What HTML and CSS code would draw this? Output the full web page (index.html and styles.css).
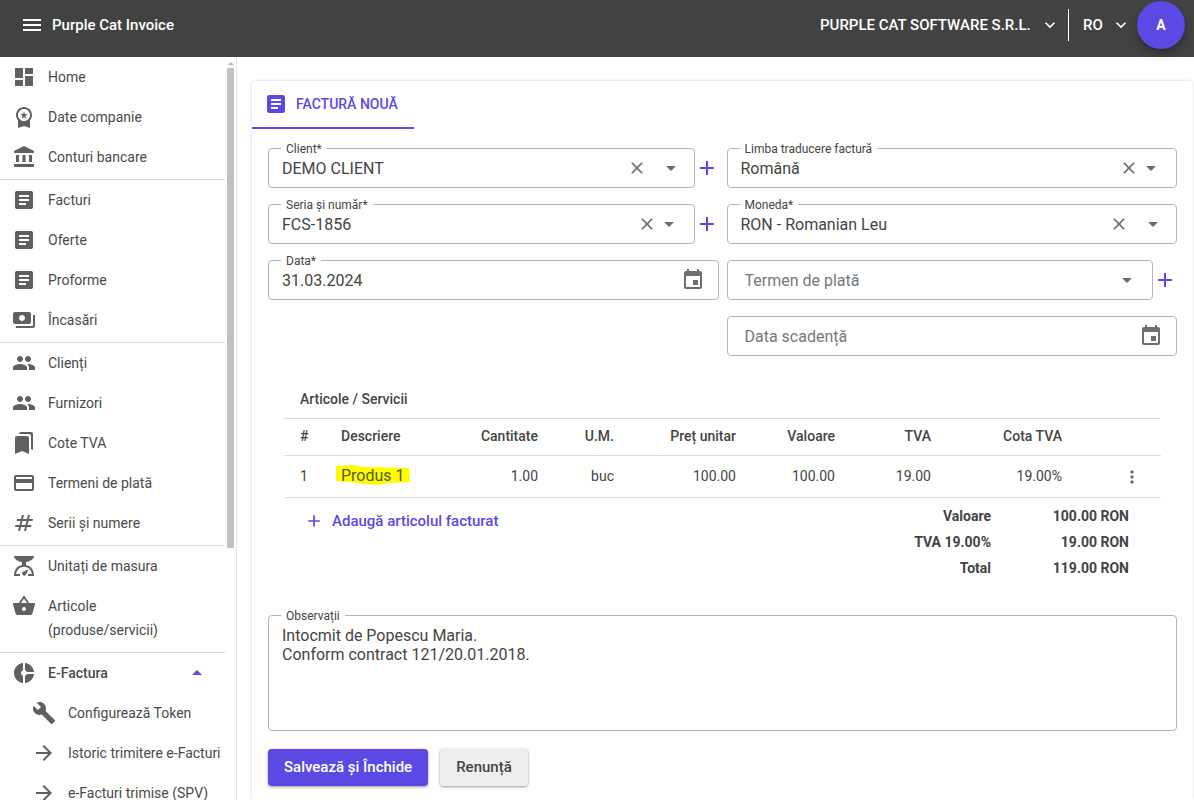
FILE: index.html
```html
<!DOCTYPE html>
<html lang="ro">
<head>
    <meta charset="UTF-8">
    <meta name="viewport" content="width=device-width, initial-scale=1.0">
    <title>Purple Cat Invoice</title>
    <link rel="stylesheet" href="styles.css">
</head>
<body>
    <!-- Icon sprite -->
    <svg class="sprite" aria-hidden="true">
        <symbol id="menu" viewBox="0 0 24 24"><path d="M3 18h18v-2H3v2zm0-5h18v-2H3v2zm0-7v2h18V6H3z"/></symbol>
        <symbol id="chevron" viewBox="0 0 24 24"><path d="M16.59 8.59L12 13.17 7.41 8.59 6 10l6 6 6-6z"/></symbol>
        <symbol id="dashboard" viewBox="0 0 24 24"><path d="M3 13h8V3H3v10zm0 8h8v-6H3v6zm10 0h8V11h-8v10zm0-18v6h8V3h-8z"/></symbol>
        <symbol id="medal" viewBox="0 0 24 24"><path d="M9.68 13.69L12 11.93l2.31 1.76-.88-2.85L15.75 9h-2.84L12 6.19 11.09 9H8.25l2.31 1.84-.88 2.85zM20 10c0-4.42-3.58-8-8-8s-8 3.58-8 8c0 2.03.76 3.87 2 5.28V23l6-2 6 2v-7.72c1.24-1.41 2-3.25 2-5.28zm-8-6c3.31 0 6 2.69 6 6s-2.69 6-6 6-6-2.69-6-6 2.69-6 6-6z"/></symbol>
        <symbol id="bank" viewBox="0 0 24 24"><path d="M4 10v7h3v-7zm6.5 0v7h3v-7zM17 10v7h3v-7zM2 22h20v-3H2zM12 1L2 6v2h20V6z"/></symbol>
        <symbol id="article" viewBox="0 0 24 24"><path d="M19 3H5c-1.1 0-2 .9-2 2v14c0 1.1.9 2 2 2h14c1.1 0 2-.9 2-2V5c0-1.1-.9-2-2-2zm-5 14H7v-2h7v2zm3-4H7v-2h10v2zm0-4H7V7h10v2z"/></symbol>
        <symbol id="payments" viewBox="0 0 24 24"><path d="M19 14V6c0-1.1-.9-2-2-2H3c-1.1 0-2 .9-2 2v8c0 1.1.9 2 2 2h14c1.1 0 2-.9 2-2zm-9-1c-1.66 0-3-1.34-3-3s1.34-3 3-3 3 1.34 3 3-1.34 3-3 3zm13-6v11c0 1.1-.9 2-2 2H4v-2h17V7h2z"/></symbol>
        <symbol id="people" viewBox="0 0 24 24"><path d="M16 11c1.66 0 2.99-1.34 2.99-3S17.66 5 16 5c-1.66 0-3 1.34-3 3s1.34 3 3 3zm-8 0c1.66 0 2.99-1.34 2.99-3S9.66 5 8 5C6.34 5 5 6.34 5 8s1.34 3 3 3zm0 2c-2.33 0-7 1.17-7 3.5V19h14v-2.5c0-2.33-4.67-3.5-7-3.5zm8 0c-.29 0-.62.02-.97.05 1.16.84 1.97 1.97 1.97 3.45V19h6v-2.5c0-2.33-4.67-3.5-7-3.5z"/></symbol>
        <symbol id="bookmarks" viewBox="0 0 24 24"><path d="M19 18l2 1V3c0-1.1-.9-2-2-2H8.99C7.89 1 7 1.9 7 3h10c1.1 0 2 .9 2 2v13zM15 5H5c-1.1 0-2 .9-2 2v16l7-3 7 3V7c0-1.1-.9-2-2-2z"/></symbol>
        <symbol id="card" viewBox="0 0 24 24"><path d="M20 4H4c-1.11 0-1.99.89-1.99 2L2 18c0 1.11.89 2 2 2h16c1.11 0 2-.89 2-2V6c0-1.11-.89-2-2-2zm0 14H4v-6h16v6zm0-10H4V6h16v2z"/></symbol>
        <symbol id="hash" viewBox="0 0 24 24"><path d="M6 20l1-4H3l.5-2h4l1-4h-4L5 8h4l1-4h2l-1 4h4l1-4h2l-1 4h4l-.5 2h-4l-1 4h4l-.5 2h-4l-1 4h-2l1-4H9l-1 4zm3.5-6h4l1-4h-4z"/></symbol>
        <symbol id="scale" viewBox="0 0 24 24"><path d="M14 11V8c4.56-.58 8-3.1 8-6H2c0 2.9 3.44 5.42 8 6v3c-3.68.73-8 3.61-8 11h6v-2H4.13c.93-6.83 6.65-7.2 7.87-7.2s6.94.37 7.87 7.2H16v2h6c0-7.39-4.32-10.27-8-11z"/><path d="M16.6 15.4l-2.7 5.3a2.1 2.1 0 1 1-3-2.9z"/></symbol>
        <symbol id="basket" viewBox="0 0 24 24"><path d="M17.21 9l-4.38-6.56c-.19-.28-.51-.42-.83-.42-.32 0-.64.14-.83.43L6.79 9H2c-.55 0-1 .45-1 1 0 .09.01.18.04.27l2.54 9.27c.23.84 1 1.46 1.92 1.46h13c.92 0 1.69-.62 1.93-1.46l2.54-9.27L23 10c0-.55-.45-1-1-1h-4.79zM9 9l3-4.4L15 9H9zm3 8c-1.1 0-2-.9-2-2s.9-2 2-2 2 .9 2 2-.9 2-2 2z"/></symbol>
        <symbol id="donut" viewBox="0 0 24 24"><path d="M11 9.16V2c-5 .5-9 4.79-9 10s4 9.5 9 10v-7.16c-1-.41-2-1.52-2-2.84s1-2.43 2-2.84zM14.86 11H22c-.48-4.75-4-8.53-9-9v7.16c1 .3 1.52.98 1.86 1.84zM13 14.84V22c5-.47 8.52-4.25 9-9h-7.14c-.34.86-.86 1.54-1.86 1.84z"/></symbol>
        <symbol id="wrench" viewBox="0 0 24 24"><path d="M22.7 19l-9.1-9.1c.9-2.3.4-5-1.5-6.9-2-2-5-2.4-7.4-1.3L9 6 6 9 1.6 4.7C.4 7.1.9 10.1 2.9 12.1c1.9 1.9 4.6 2.4 6.9 1.5l9.1 9.1c.4.4 1 .4 1.4 0l2.3-2.3c.5-.4.5-1.1.1-1.4z"/></symbol>
        <symbol id="forward" viewBox="0 0 24 24"><path d="M12 4l-1.41 1.41L16.17 11H4v2h12.17l-5.58 5.59L12 20l8-8z"/></symbol>
        <symbol id="up" viewBox="0 0 24 24"><path d="M7 14l5-5 5 5z"/></symbol>
        <symbol id="down" viewBox="0 0 24 24"><path d="M7 10l5 5 5-5z"/></symbol>
        <symbol id="close" viewBox="0 0 24 24"><path d="M19 6.41L17.59 5 12 10.59 6.41 5 5 6.41 10.59 12 5 17.59 6.41 19 12 13.41 17.59 19 19 17.59 13.41 12z"/></symbol>
        <symbol id="add" viewBox="0 0 24 24"><path d="M19 13h-6v6h-2v-6H5v-2h6V5h2v6h6v2z"/></symbol>
        <symbol id="event" viewBox="0 0 24 24"><path d="M17 12h-5v5h5v-5zM16 1v2H8V1H6v2H5c-1.11 0-1.99.9-1.99 2L3 19c0 1.1.89 2 2 2h14c1.1 0 2-.9 2-2V5c0-1.1-.9-2-2-2h-1V1h-2zm3 18H5V8h14v11z"/></symbol>
        <symbol id="more" viewBox="0 0 24 24"><path d="M12 8c1.1 0 2-.9 2-2s-.9-2-2-2-2 .9-2 2 .9 2 2 2zm0 2c-1.1 0-2 .9-2 2s.9 2 2 2 2-.9 2-2-.9-2-2-2zm0 6c-1.1 0-2 .9-2 2s.9 2 2 2 2-.9 2-2-.9-2-2-2z"/></symbol>
    </svg>

    <header class="topbar">
        <button class="icon-btn" type="button" aria-label="Meniu"><svg class="icon"><use href="#menu"/></svg></button>
        <span class="brand">Purple Cat Invoice</span>
        <div class="picker">
            <select aria-label="Companie"><option>PURPLE CAT SOFTWARE S.R.L.</option></select>
            <svg class="icon icon-chevron"><use href="#chevron"/></svg>
        </div>
        <div class="picker picker-lang">
            <select aria-label="Limba"><option>RO</option></select>
            <svg class="icon icon-chevron"><use href="#chevron"/></svg>
        </div>
        <button class="avatar" type="button" aria-label="Cont">A</button>
    </header>

    <div class="layout">
        <aside class="sidebar">
            <nav class="nav">
                <div class="nav-group">
                    <a class="nav-item" href="#"><svg class="icon"><use href="#dashboard"/></svg>Home</a>
                    <a class="nav-item" href="#"><svg class="icon"><use href="#medal"/></svg>Date companie</a>
                    <a class="nav-item" href="#"><svg class="icon"><use href="#bank"/></svg>Conturi bancare</a>
                </div>
                <div class="nav-group">
                    <a class="nav-item" href="#"><svg class="icon"><use href="#article"/></svg>Facturi</a>
                    <a class="nav-item" href="#"><svg class="icon"><use href="#article"/></svg>Oferte</a>
                    <a class="nav-item" href="#"><svg class="icon"><use href="#article"/></svg>Proforme</a>
                    <a class="nav-item" href="#"><svg class="icon"><use href="#payments"/></svg>Încasări</a>
                </div>
                <div class="nav-group">
                    <a class="nav-item" href="#"><svg class="icon"><use href="#people"/></svg>Clienți</a>
                    <a class="nav-item" href="#"><svg class="icon"><use href="#people"/></svg>Furnizori</a>
                    <a class="nav-item" href="#"><svg class="icon"><use href="#bookmarks"/></svg>Cote TVA</a>
                    <a class="nav-item" href="#"><svg class="icon"><use href="#card"/></svg>Termeni de plată</a>
                    <a class="nav-item" href="#"><svg class="icon"><use href="#hash"/></svg>Serii și numere</a>
                </div>
                <div class="nav-group">
                    <a class="nav-item" href="#"><svg class="icon"><use href="#scale"/></svg>Unitați de masura</a>
                    <a class="nav-item" href="#"><svg class="icon"><use href="#basket"/></svg>Articole<br>(produse/servicii)</a>
                </div>
                <div class="nav-group">
                    <button class="nav-item nav-parent" type="button"><svg class="icon"><use href="#donut"/></svg>E-Factura<svg class="icon icon-up"><use href="#up"/></svg></button>
                    <a class="nav-item nav-child" href="#"><svg class="icon"><use href="#wrench"/></svg>Configurează Token</a>
                    <a class="nav-item nav-child" href="#"><svg class="icon"><use href="#forward"/></svg>Istoric trimitere e-Facturi</a>
                    <a class="nav-item nav-child" href="#"><svg class="icon"><use href="#forward"/></svg>e-Facturi trimise (SPV)</a>
                </div>
            </nav>
            <div class="scrollbar">
                <div class="scroll-arrow"></div>
                <div class="scroll-thumb"></div>
            </div>
        </aside>

        <main class="main">
            <form class="card">
                <div class="tabs">
                    <button class="tab" type="button"><svg class="icon"><use href="#article"/></svg>FACTURĂ NOUĂ</button>
                </div>

                <div class="card-body">
                    <div class="fields">
                        <div class="field-row">
                            <div class="field field-wide">
                                <label for="client">Client*</label>
                                <select id="client"><option>DEMO CLIENT</option></select>
                                <button class="icon-btn" type="button" aria-label="Șterge"><svg class="icon icon-small"><use href="#close"/></svg></button>
                                <svg class="icon"><use href="#down"/></svg>
                            </div>
                            <button class="icon-btn add" type="button" aria-label="Adaugă client"><svg class="icon"><use href="#add"/></svg></button>
                        </div>
                        <div class="field-row">
                            <div class="field">
                                <label for="limba">Limba traducere factură</label>
                                <select id="limba"><option>Română</option></select>
                                <button class="icon-btn" type="button" aria-label="Șterge"><svg class="icon icon-small"><use href="#close"/></svg></button>
                                <svg class="icon"><use href="#down"/></svg>
                            </div>
                        </div>
                        <div class="field-row">
                            <div class="field">
                                <label for="seria">Seria și număr*</label>
                                <select id="seria"><option>FCS-1856</option></select>
                                <button class="icon-btn" type="button" aria-label="Șterge"><svg class="icon icon-small"><use href="#close"/></svg></button>
                                <svg class="icon"><use href="#down"/></svg>
                            </div>
                            <button class="icon-btn add" type="button" aria-label="Adaugă serie"><svg class="icon"><use href="#add"/></svg></button>
                        </div>
                        <div class="field-row">
                            <div class="field field-wide">
                                <label for="moneda">Moneda*</label>
                                <select id="moneda"><option>RON - Romanian Leu</option></select>
                                <button class="icon-btn" type="button" aria-label="Șterge"><svg class="icon icon-small"><use href="#close"/></svg></button>
                                <svg class="icon"><use href="#down"/></svg>
                            </div>
                        </div>
                        <div class="field-row">
                            <div class="field">
                                <label for="data">Data*</label>
                                <input id="data" type="text" value="31.03.2024">
                                <button class="icon-btn" type="button" aria-label="Alege data"><svg class="icon"><use href="#event"/></svg></button>
                            </div>
                        </div>
                        <div class="field-row">
                            <div class="field field-empty">
                                <select aria-label="Termen de plată"><option>Termen de plată</option></select>
                                <svg class="icon"><use href="#down"/></svg>
                            </div>
                            <button class="icon-btn add" type="button" aria-label="Adaugă termen"><svg class="icon"><use href="#add"/></svg></button>
                        </div>
                        <div class="field-row field-right">
                            <div class="field field-empty">
                                <input type="text" placeholder="Data scadență" aria-label="Data scadență">
                                <button class="icon-btn" type="button" aria-label="Alege data"><svg class="icon"><use href="#event"/></svg></button>
                            </div>
                        </div>
                    </div>

                    <section class="items">
                        <h2>Articole / Servicii</h2>
                        <table class="items-table">
                            <colgroup>
                                <col class="col-nr">
                                <col>
                                <col class="col-qty">
                                <col class="col-um">
                                <col class="col-price">
                                <col class="col-value">
                                <col class="col-vat">
                                <col class="col-rate">
                                <col class="col-menu">
                            </colgroup>
                            <thead>
                                <tr>
                                    <th class="left">#</th>
                                    <th class="left">Descriere</th>
                                    <th>Cantitate</th>
                                    <th>U.M.</th>
                                    <th>Preț unitar</th>
                                    <th>Valoare</th>
                                    <th>TVA</th>
                                    <th>Cota TVA</th>
                                    <th></th>
                                </tr>
                            </thead>
                            <tbody>
                                <tr>
                                    <td class="left">1</td>
                                    <td class="left">
                                        <span class="marked">
                                            <svg class="marker" viewBox="0 0 74 21" preserveAspectRatio="none"><path d="M0 1L16 0l12 2 45 1 1 14-20 1-13 2-14-1-12-2L0 16z"/></svg>
                                            <span class="marked-text">Produs 1</span>
                                        </span>
                                    </td>
                                    <td>1.00</td>
                                    <td>buc</td>
                                    <td>100.00</td>
                                    <td>100.00</td>
                                    <td>19.00</td>
                                    <td>19.00%</td>
                                    <td><button class="icon-btn" type="button" aria-label="Opțiuni"><svg class="icon icon-small"><use href="#more"/></svg></button></td>
                                </tr>
                            </tbody>
                        </table>

                        <div class="summary">
                            <button class="add-item" type="button"><svg class="icon icon-small"><use href="#add"/></svg>Adaugă articolul facturat</button>
                            <table class="totals">
                                <tr><th>Valoare</th><td>100.00 RON</td></tr>
                                <tr><th>TVA 19.00%</th><td>19.00 RON</td></tr>
                                <tr><th>Total</th><td>119.00 RON</td></tr>
                            </table>
                        </div>
                    </section>

                    <div class="field field-notes">
                        <label for="obs">Observații</label>
                        <textarea id="obs">Intocmit de Popescu Maria.
Conform contract 121/20.01.2018.</textarea>
                    </div>

                    <div class="actions">
                        <button class="btn btn-primary" type="submit">Salvează și Închide</button>
                        <button class="btn" type="button">Renunță</button>
                    </div>
                </div>
            </form>
        </main>
    </div>
</body>
</html>
```

FILE: styles.css
```css
* {
    box-sizing: border-box;
}

body {
    margin: 0;
    height: 100vh;
    display: flex;
    flex-direction: column;
    overflow: hidden;
    font-family: Roboto, "Liberation Sans", sans-serif;
    font-size: 14px;
    line-height: 24px;
    color: #444;
    background: #fff;
}

button,
input,
select,
textarea {
    font: inherit;
    color: inherit;
    background: transparent;
    border: none;
    outline: none;
    padding: 0;
    margin: 0;
}

select {
    appearance: none;
}

button {
    cursor: pointer;
}

.sprite {
    position: absolute;
    width: 0;
    height: 0;
}

.icon {
    display: block;
    flex: none;
    width: 24px;
    height: 24px;
    fill: currentColor;
}

.icon-small {
    width: 20px;
    height: 20px;
}

.icon-chevron {
    width: 20px;
    height: 20px;
    pointer-events: none;
}

.icon-btn {
    display: inline-flex;
    flex: none;
}

/* Top bar */
.topbar {
    display: flex;
    flex: none;
    align-items: center;
    padding: 1px 9px 8px 20px;
    color: #fff;
    background: #424242;
    font-size: 15px;
    font-weight: 500;
}

.brand {
    flex: 1;
    margin-left: 8px;
}

.picker {
    display: flex;
    align-items: center;
    gap: 8px;
    height: 32px;
    padding-right: 8px;
}

.picker-lang {
    border-left: 1px solid #fff;
    padding: 0 6px 0 14px;
}

.avatar {
    width: 48px;
    height: 48px;
    border-radius: 50%;
    background: #5a4ae3;
    font-size: 14px;
    font-weight: 700;
    box-shadow: 0 3px 5px rgba(0, 0, 0, 0.2), 0 6px 10px rgba(0, 0, 0, 0.14);
}

/* Sidebar */
.layout {
    display: flex;
    flex: 1;
    min-height: 0;
}

.sidebar {
    display: flex;
    flex: none;
    width: 237px;
    overflow: hidden;
    border-right: 1px solid #e4e4e4;
}

.nav {
    flex: 1;
}

.nav-group {
    padding-bottom: 2px;
    border-bottom: 1px solid #dcdcdc;
}

.nav-item {
    display: flex;
    align-items: flex-start;
    gap: 12px;
    width: 100%;
    padding: 8px 0 8px 12px;
    color: #4a4a4a;
    text-align: left;
    text-decoration: none;
    white-space: nowrap;
}

.nav-item .icon {
    color: #606060;
}

.nav-parent {
    padding-right: 16px;
    font-weight: 500;
}

.nav-child {
    padding-left: 32px;
}

.nav-item .icon-up {
    margin-left: auto;
    color: #5a4ae3;
}

.scrollbar {
    display: flex;
    flex-direction: column;
    align-items: center;
    width: 11px;
    padding-top: 5px;
}

.scroll-arrow {
    border: 3px solid transparent;
    border-top: none;
    border-bottom: 3px solid #b5b5b5;
    margin-bottom: 3px;
}

.scroll-thumb {
    width: 7px;
    height: 65%;
    background: #c1c1c1;
}

/* Invoice card */
.main {
    flex: 1;
    min-width: 0;
    padding: 24px 1px 0 15px;
}

.card {
    height: 100%;
    border-radius: 4px 4px 0 0;
    box-shadow: 0 0 3px rgba(0, 0, 0, 0.2);
}

.tabs {
    display: flex;
}

.tab {
    display: flex;
    align-items: center;
    gap: 8px;
    height: 48px;
    padding: 0 16px 0 12px;
    color: #5a4ae3;
    font-weight: 500;
    border-bottom: 2px solid #5a4ae3;
}

.card-body {
    padding: 19px 16px 0;
}

.fields {
    display: grid;
    grid-template-columns: 1fr 1fr;
    gap: 16px 8px;
}

.field-row {
    display: flex;
    align-items: center;
    min-width: 0;
}

.field-right {
    grid-column: 2;
}

.field {
    position: relative;
    display: flex;
    flex: 1;
    align-items: center;
    min-width: 0;
    height: 40px;
    padding: 0 13px;
    border: 1px solid #b4b4b4;
    border-radius: 4px;
    font-size: 16px;
}

.field label {
    position: absolute;
    top: -8px;
    left: 12px;
    padding: 0 5px;
    background: #fff;
    font-size: 12px;
    line-height: 16px;
}

.field select,
.field input {
    flex: 1;
    min-width: 0;
    height: 100%;
}

.field select {
    padding-top: 2px;
}

.field .icon {
    color: #6e6e6e;
}

.field-wide {
    gap: 12px;
    padding-right: 11px;
}

.field-empty {
    padding-left: 17px;
    color: #777;
}

.field-empty input::placeholder {
    color: #777;
}

.add,
.add-item {
    color: #5a4ae3;
}

/* Items */
.items {
    padding: 24px 16px 34px;
}

.items h2 {
    margin: 0;
    padding: 7px 16px;
    border-bottom: 1px solid #dedede;
    font-size: 14px;
    font-weight: 500;
}

.items-table {
    width: 100%;
    table-layout: fixed;
    border-collapse: separate;
    border-spacing: 0;
}

.items-table th,
.items-table td {
    height: 42px;
    padding: 0 16px 2px 0;
    border-bottom: 1px solid #dedede;
    text-align: right;
}

.items-table th {
    height: 37px;
    font-weight: 500;
}

.items-table .left {
    padding: 0 0 2px 16px;
    text-align: left;
}

.items-table .icon-btn {
    vertical-align: middle;
    padding: 0 3px;
    color: #6e6e6e;
}

.col-nr {
    width: 41px;
}

.col-qty {
    width: 90px;
}

.col-um {
    width: 76px;
}

.col-price {
    width: 122px;
}

.col-value {
    width: 99px;
}

.col-vat {
    width: 96px;
}

.col-rate {
    width: 131px;
}

.col-menu {
    width: 83px;
}

/* Highlighter stroke behind the product name */
.marked {
    position: relative;
    display: inline-block;
    font-size: 16px;
    color: #5c5714;
}

.marker {
    position: absolute;
    top: 1px;
    left: -5px;
    width: 74px;
    height: 21px;
    fill: #fdfd00;
}

.marked-text {
    position: relative;
}

.summary {
    display: flex;
    align-items: flex-start;
    justify-content: space-between;
    padding: 5px 32px 0 20px;
}

.add-item {
    display: flex;
    align-items: center;
    gap: 8px;
    height: 36px;
    font-size: 15px;
    font-weight: 500;
}

.totals {
    border-spacing: 0;
    font-weight: 700;
    text-align: right;
}

.totals th,
.totals td {
    height: 26px;
    padding: 0;
}

.totals td {
    width: 138px;
}

.field-notes {
    height: 116px;
    padding: 10px 13px;
}

.field-notes textarea {
    width: 100%;
    height: 100%;
    line-height: 19px;
    resize: none;
}

.actions {
    display: flex;
    gap: 12px;
    padding-top: 18px;
}

.btn {
    height: 37px;
    padding: 0 16px 2px;
    border-radius: 4px;
    background: #eee;
    font-size: 15px;
    font-weight: 500;
    box-shadow: 0 1px 3px rgba(0, 0, 0, 0.4);
}

.btn-primary {
    color: #fff;
    background: #5a4ae3;
}
```
